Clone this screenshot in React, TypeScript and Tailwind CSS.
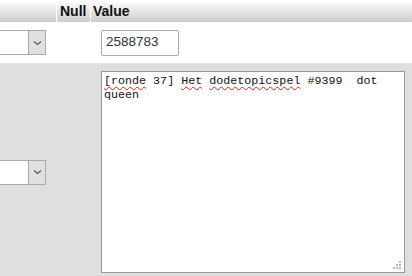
import React from 'react'

function FakeSelect() {
  return (
    <div className="flex h-[25px] w-[80px] -ml-[34px] border border-[#aaa] bg-white">
      <div className="flex-1" />
      <div className="flex w-[17px] items-center justify-center border-l border-[#aaa] bg-[#e0e0e0]">
        <svg width="9" height="6" viewBox="0 0 9 6">
          <path d="M1 1.5 L4.5 4.5 L8 1.5" fill="none" stroke="#555" strokeWidth="1.1" />
        </svg>
      </div>
    </div>
  )
}

const wavy = 'underline decoration-wavy decoration-[#e02020] decoration-1 underline-offset-[2px]'

export default function App() {
  return (
    <div className="h-[276px] w-[412px] overflow-hidden bg-[#dfdfdf] font-['Liberation_Sans',Arial,sans-serif]">
      {/* header */}
      <div className="grid h-[22px] grid-cols-[57px_34px_1fr] bg-gradient-to-b from-white to-[#cccccc] text-[14px] font-bold leading-[22px] text-[#111]">
        <div className="border-r border-white" />
        <div className="border-r border-white pl-[3px]">Null</div>
        <div className="pl-[2px]">Value</div>
      </div>

      {/* row 1 */}
      <div className="grid h-[41px] grid-cols-[57px_34px_1fr] items-center bg-white">
        <div className="flex">
          <FakeSelect />
        </div>
        <div />
        <div className="pl-[10px]">
          <div className="flex h-[26px] w-[78px] items-center rounded-[2px] border border-[#aaa] bg-white pl-[4px] text-[13.5px] text-[#333]">
            2588783
          </div>
        </div>
      </div>

      {/* row 2 */}
      <div className="grid grid-cols-[57px_34px_1fr] bg-[#dfdfdf] pt-[8px]">
        <div className="flex items-center">
          <FakeSelect />
        </div>
        <div />
        <div className="pl-[10px] pr-[7px]">
          <div className="relative h-[202px] border border-[#999] bg-white px-[2px] pt-[2px] font-['Liberation_Mono','Courier_New',monospace] text-[11.7px] leading-[14px] text-[#111] whitespace-pre-wrap">
            <span className={wavy}>[ronde</span> 37] <span className={wavy}>Het</span>{' '}
            <span className={wavy}>dodetopicspel</span> #9399  dot queen
            <svg className="absolute bottom-[2px] right-[2px]" width="9" height="9" viewBox="0 0 9 9">
              <rect x="6" y="0" width="2" height="2" fill="#bbb" />
              <rect x="3" y="3" width="2" height="2" fill="#bbb" />
              <rect x="6" y="3" width="2" height="2" fill="#bbb" />
              <rect x="0" y="6" width="2" height="2" fill="#bbb" />
              <rect x="3" y="6" width="2" height="2" fill="#bbb" />
              <rect x="6" y="6" width="2" height="2" fill="#bbb" />
            </svg>
          </div>
        </div>
      </div>
    </div>
  )
}
